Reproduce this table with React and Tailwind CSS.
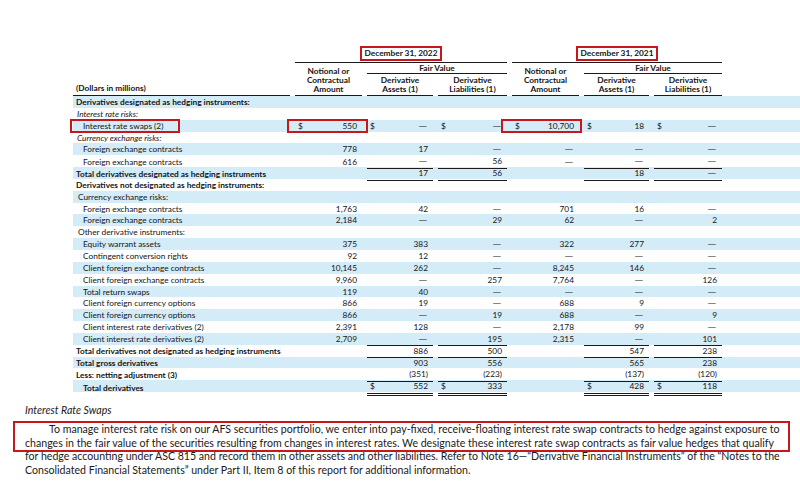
import React from 'react';

const cols = 'grid grid-cols-[217px_67px_66px_69px_67px_65px_68px] gap-x-[5px]';

// rows of the derivatives table: [label, style, values, options]
const rows = [
  { label: 'Derivatives designated as hedging instruments:', type: 'bold', vals: ['', '', '', '', '', ''] },
  { label: 'Interest rate risks:', type: 'italic', vals: ['', '', '', '', '', ''] },
  { label: 'Interest rate swaps (2)', type: 'item', vals: ['550', '—', '—', '10,700', '18', '—'], dollar: true, box: true },
  { label: 'Currency exchange risks:', type: 'italic', vals: ['', '', '', '', '', ''] },
  { label: 'Foreign exchange contracts', type: 'item', vals: ['778', '17', '—', '—', '—', '—'] },
  { label: 'Foreign exchange contracts', type: 'item', vals: ['616', '—', '56', '—', '—', '—'], line: 'single' },
  { label: 'Total derivatives designated as hedging instruments', type: 'bold', vals: ['', '17', '56', '', '18', '—'], line: 'single' },
  { label: 'Derivatives not designated as hedging instruments:', type: 'bold', vals: ['', '', '', '', '', ''] },
  { label: 'Currency exchange risks:', type: 'sub', vals: ['', '', '', '', '', ''] },
  { label: 'Foreign exchange contracts', type: 'item', vals: ['1,763', '42', '—', '701', '16', '—'] },
  { label: 'Foreign exchange contracts', type: 'item', vals: ['2,184', '—', '29', '62', '—', '2'] },
  { label: 'Other derivative instruments:', type: 'sub', vals: ['', '', '', '', '', ''] },
  { label: 'Equity warrant assets', type: 'item', vals: ['375', '383', '—', '322', '277', '—'] },
  { label: 'Contingent conversion rights', type: 'item', vals: ['92', '12', '—', '—', '—', '—'] },
  { label: 'Client foreign exchange contracts', type: 'item', vals: ['10,145', '262', '—', '8,245', '146', '—'] },
  { label: 'Client foreign exchange contracts', type: 'item', vals: ['9,960', '—', '257', '7,764', '—', '126'] },
  { label: 'Total return swaps', type: 'item', vals: ['119', '40', '—', '—', '—', '—'] },
  { label: 'Client foreign currency options', type: 'item', vals: ['866', '19', '—', '688', '9', '—'] },
  { label: 'Client foreign currency options', type: 'item', vals: ['866', '—', '19', '688', '—', '9'] },
  { label: 'Client interest rate derivatives (2)', type: 'item', vals: ['2,391', '128', '—', '2,178', '99', '—'] },
  { label: 'Client interest rate derivatives (2)', type: 'item', vals: ['2,709', '—', '195', '2,315', '—', '101'], line: 'single' },
  { label: 'Total derivatives not designated as hedging instruments', type: 'bold', vals: ['', '886', '500', '', '547', '238'], line: 'single' },
  { label: 'Total gross derivatives', type: 'bold', vals: ['', '903', '556', '', '565', '238'] },
  { label: 'Less: netting adjustment (3)', type: 'bold', vals: ['', '(351)', '(223)', '', '(137)', '(120)'], line: 'single' },
  { label: 'Total derivatives', type: 'boldItem', vals: ['', '552', '333', '', '428', '118'], dollar: true, line: 'double' },
];

const labelClass = {
  bold: 'pl-[3px] font-bold',
  italic: 'pl-[4px] italic',
  item: 'pl-[10px]',
  sub: 'pl-[5px]',
  boldItem: 'pl-[10px] font-bold',
};

const paragraph = [
  'To manage interest rate risk on our AFS securities portfolio, we enter into pay-fixed, receive-floating interest rate swap contracts to hedge against exposure to',
  'changes in the fair value of the securities resulting from changes in interest rates. We designate these interest rate swap contracts as fair value hedges that qualify',
  'for hedge accounting under ASC 815 and record them in other assets and other liabilities. Refer to Note 16—“Derivative Financial Instruments” of the “Notes to the',
  'Consolidated Financial Statements” under Part II, Item 8 of this report for additional information.',
];

const RedBox = ({ className }) => (
  <div className={`absolute border-2 border-[#c8161d] pointer-events-none ${className}`} />
);

const Cell = ({ value, dollar, line, idx, box }) => {
  const fair = idx === 1 || idx === 2 || idx === 4 || idx === 5;
  let under = '';
  if (fair && line === 'single') under = 'border-b-[1.5px] border-[#1a1a1a]';
  if (fair && line === 'double') under = 'border-b-[3px] border-double border-[#1a1a1a]';
  const showDollar = dollar && value !== '';
  return (
    <div className={`relative flex items-center justify-end pr-[5px] ${under}`}>
      {showDollar && <span className="absolute left-[3px]">$</span>}
      <span className={`relative ${value === '—' ? 'scale-x-[1.4] origin-right' : ''}`}>{value}</span>
      {box && idx === 0 && <RedBox className="-left-[8px] -right-[6px] -top-[1px] -bottom-[1px]" />}
      {box && idx === 3 && <RedBox className="-left-[11px] -right-[3px] -top-[1px] -bottom-[1px]" />}
    </div>
  );
};

const Row = ({ row, shaded }) => (
  <div className={`${cols} h-[11.85px] ${shaded ? 'bg-[#d4ebf8]' : 'bg-white'}`}>
    <div className={`relative flex items-center ${labelClass[row.type]}`}>
      {row.label}
      {row.box && <RedBox className="-left-[3px] w-[110px] -top-[1px] -bottom-[1px]" />}
    </div>
    {row.vals.map((v, i) => (
      <Cell key={i} idx={i} value={v} dollar={row.dollar} line={row.line} box={row.box} />
    ))}
  </div>
);

const GroupHeader = ({ date }) => (
  <div className="flex justify-center border-b-[1.5px] border-[#1a1a1a] pb-px">
    <div className="border-2 border-[#c8161d] px-[3px] h-[15px] flex items-center font-bold">{date}</div>
  </div>
);

const ColHead = ({ children, className = '' }) => (
  <div className={`flex flex-col items-center justify-end font-bold leading-[9px] pb-[1px] border-b-[1.5px] border-[#1a1a1a] ${className}`}>
    {children}
  </div>
);

export default function App() {
  return (
    <div className="w-[800px] h-[485px] bg-white text-[#141414] overflow-hidden font-['Lato',sans-serif]">
      <div className="pl-[73px] pt-[46px] text-[8.3px]">
        {/* column headers */}
        <div className={`${cols} grid-rows-[17px_11px_22px]`}>
          <div />
          <div className="col-span-3"><GroupHeader date="December 31, 2022" /></div>
          <div className="col-span-3"><GroupHeader date="December 31, 2021" /></div>

          <div className="row-span-2 flex items-end font-bold pl-[3px] pb-[1px] border-b border-[#1a1a1a]">(Dollars in millions)</div>
          <ColHead className="row-span-2">
            <span>Notional or</span><span>Contractual</span><span>Amount</span>
          </ColHead>
          <div className="col-span-2 flex justify-center items-center font-bold border-b-[1.5px] border-[#1a1a1a]">Fair Value</div>
          <ColHead className="row-span-2">
            <span>Notional or</span><span>Contractual</span><span>Amount</span>
          </ColHead>
          <div className="col-span-2 flex justify-center items-center font-bold border-b-[1.5px] border-[#1a1a1a]">Fair Value</div>

          <ColHead><span>Derivative</span><span>Assets (1)</span></ColHead>
          <ColHead><span>Derivative</span><span>Liabilities (1)</span></ColHead>
          <ColHead><span>Derivative</span><span>Assets (1)</span></ColHead>
          <ColHead><span>Derivative</span><span>Liabilities (1)</span></ColHead>
        </div>

        {/* body */}
        <div className="flex flex-col">
          {rows.map((r, i) => (
            <Row key={i} row={r} shaded={i % 2 === 0} />
          ))}
        </div>
      </div>

      <div className="pl-[25px] mt-[12px] text-[10.6px] text-[#1a1a1a]">
        <div className="italic leading-[13px]">Interest Rate Swaps</div>
        <div className="relative mt-[6px] w-[770px] leading-[13.5px]">
          <RedBox className="-left-[12px] w-[777px] -top-[2px] h-[31px]" />
          {paragraph.map((line, i) => (
            <div key={i} className={`whitespace-nowrap ${i === 0 ? 'pl-[24px]' : ''}`}>{line}</div>
          ))}
        </div>
      </div>
    </div>
  );
}
